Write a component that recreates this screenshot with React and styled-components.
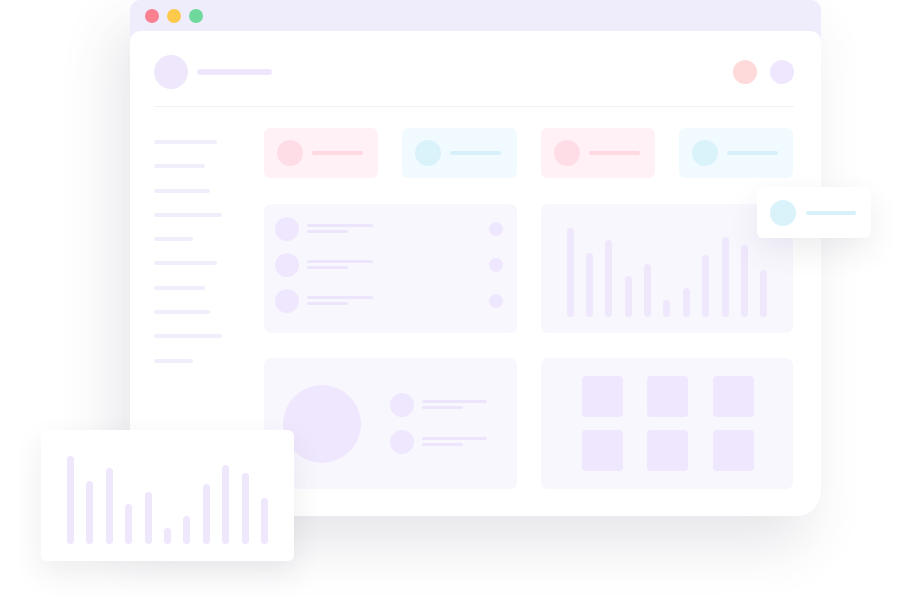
import React from 'react';
import styled, { createGlobalStyle } from 'styled-components';

const GlobalStyle = createGlobalStyle`
  html, body { margin: 0; padding: 0; background: #ffffff; }
  body { font-family: "Liberation Sans", Arial, sans-serif; overflow: hidden; }
`;

const Stage = styled.div`
  position: relative;
  width: 900px;
  height: 600px;
  background: #ffffff;
`;

const Window = styled.div`
  margin-left: 130px;
  width: 691px;
  height: 516px;
  display: flex;
  flex-direction: column;
  background: #efecfb;
  border-radius: 10px 10px 24px 24px;
  box-shadow: -14px 28px 55px rgba(60, 60, 90, 0.13);
`;

const TitleBar = styled.div`
  height: 31px;
  flex: none;
  display: flex;
  align-items: center;
  gap: 8px;
  padding-left: 15px;
`;

const Dot = styled.span`
  width: 14px;
  height: 14px;
  border-radius: 50%;
  background: ${(p) => p.color};
`;

const Panel = styled.div`
  flex: 1;
  background: #ffffff;
  border-radius: 10px 10px 24px 24px;
  padding: 24px 28px 27px 24px;
  display: flex;
  flex-direction: column;
`;

const Header = styled.div`
  display: flex;
  align-items: center;
  gap: 9px;
  margin-right: -1px;
  padding-bottom: 17px;
  border-bottom: 1.5px solid #f2f1f6;
`;

const Circle = styled.span`
  flex: none;
  display: block;
  width: ${(p) => p.size}px;
  height: ${(p) => p.size}px;
  border-radius: 50%;
  background: ${(p) => p.color};
`;

const Line = styled.span`
  display: block;
  width: ${(p) => p.w}px;
  height: ${(p) => p.h || 4}px;
  border-radius: 3px;
  background: ${(p) => p.color};
`;

const Spacer = styled.div`
  flex: 1;
`;

const HeaderIcons = styled.div`
  display: flex;
  gap: 13px;
  margin-right: 0;
`;

const Body = styled.div`
  flex: 1;
  display: flex;
  padding-top: 21px;
`;

const Sidebar = styled.div`
  width: 110px;
  flex: none;
  display: flex;
  flex-direction: column;
  gap: 20.3px;
  padding-top: 12px;
`;

const Main = styled.div`
  flex: 1;
  display: flex;
  flex-direction: column;
  gap: 25.5px;
`;

const StatGrid = styled.div`
  display: grid;
  grid-template-columns: repeat(4, 1fr);
  gap: 24px;
`;

const StatCard = styled.div`
  height: 50px;
  border-radius: 6px;
  background: ${(p) => p.bg};
  display: flex;
  align-items: center;
  gap: 9px;
  padding-left: 13px;
`;

const CardRow = styled.div`
  display: grid;
  grid-template-columns: 1fr 1fr;
  gap: 24px;
  height: ${(p) => p.h}px;
`;

const Card = styled.div`
  background: #f9f7fe;
  border-radius: 7px;
`;

const ListCard = styled(Card)`
  display: flex;
  flex-direction: column;
  gap: 12px;
  padding: 13px 14px 0 11px;
`;

const ListRow = styled.div`
  display: flex;
  align-items: center;
  gap: 8px;
`;

const LineStack = styled.div`
  display: flex;
  flex-direction: column;
  gap: 3px;
`;

const Bars = styled.div`
  display: flex;
  align-items: flex-end;
  gap: ${(p) => p.gap}px;
  height: ${(p) => p.h}px;
`;

const Bar = styled.span`
  width: 7px;
  height: ${(p) => p.h}px;
  border-radius: 4px;
  background: #efe8fd;
`;

const ChartCard = styled(Card)`
  display: flex;
  align-items: flex-end;
  padding: 0 0 16px 26px;
`;

const PieCard = styled(Card)`
  display: flex;
  align-items: center;
  padding-left: 19px;
  gap: 29px;
`;

const Legend = styled.div`
  display: flex;
  flex-direction: column;
  gap: 13px;
  margin-top: -1px;
`;

const TileCard = styled(Card)`
  display: grid;
  grid-template-columns: repeat(3, 41px);
  grid-template-rows: repeat(2, 41px);
  gap: 13px 24.5px;
  padding: 18px 0 0 41px;
`;

const Tile = styled.span`
  border-radius: 4px;
  background: #efe7fd;
`;

const FloatCard = styled.div`
  position: absolute;
  background: #ffffff;
  border-radius: 6px;
  box-shadow: 0 12px 30px rgba(50, 50, 80, 0.09);
`;

const BadgeCard = styled(FloatCard)`
  left: 757px;
  top: 187px;
  width: 114px;
  height: 51px;
  display: flex;
  align-items: center;
  gap: 10px;
  padding-left: 13px;
  box-sizing: border-box;
`;

const ChartFloat = styled(FloatCard)`
  left: 41px;
  top: 430px;
  width: 253px;
  height: 131px;
  box-sizing: border-box;
  display: flex;
  align-items: flex-end;
  padding: 0 0 17px 26px;
`;

const sideLines = [63, 51, 56, 68, 39, 63, 51, 56, 68, 39];
const stats = [
  { bg: '#fff1f5', dot: '#ffdde7', line: '#ffd8e2' },
  { bg: '#f1fbff', dot: '#daf3fb', line: '#d6f1fa' },
  { bg: '#fff1f5', dot: '#ffdde7', line: '#ffd8e2' },
  { bg: '#f1fbff', dot: '#daf3fb', line: '#d6f1fa' },
];
const mainBars = [89, 64, 77, 41, 53, 17, 29, 62, 80, 72, 47];
const floatBars = [88, 63, 76, 40, 52, 16, 28, 60, 79, 71, 46];

const BarChart = ({ data, h, gap }) => (
  <Bars h={h} gap={gap}>
    {data.map((v, i) => <Bar key={i} h={v} />)}
  </Bars>
);

export default function App() {
  return (
    <Stage>
      <GlobalStyle />
      <Window>
        <TitleBar>
          <Dot color="#f8808f" />
          <Dot color="#fdca4c" />
          <Dot color="#6fd99d" />
        </TitleBar>
        <Panel>
          <Header>
            <Circle size={34} color="#efe8fd" />
            <Line w={75} h={6} color="#efe7fd" />
            <Spacer />
            <HeaderIcons>
              <Circle size={24} color="#fedada" />
              <Circle size={24} color="#efe7fd" />
            </HeaderIcons>
          </Header>
          <Body>
            <Sidebar>
              {sideLines.map((w, i) => <Line key={i} w={w} color="#f0eefb" />)}
            </Sidebar>
            <Main>
              <StatGrid>
                {stats.map((s, i) => (
                  <StatCard key={i} bg={s.bg}>
                    <Circle size={26} color={s.dot} />
                    <Line w={51} color={s.line} />
                  </StatCard>
                ))}
              </StatGrid>
              <CardRow h={129}>
                <ListCard>
                  {[0, 1, 2].map((i) => (
                    <ListRow key={i}>
                      <Circle size={24} color="#efe7fd" />
                      <LineStack>
                        <Line w={66} h={3} color="#ede5fc" />
                        <Line w={41} h={3} color="#ede5fc" />
                      </LineStack>
                      <Spacer />
                      <Circle size={14} color="#efe7fd" />
                    </ListRow>
                  ))}
                </ListCard>
                <ChartCard>
                  <BarChart data={mainBars} h={89} gap={12.4} />
                </ChartCard>
              </CardRow>
              <CardRow h={131}>
                <PieCard>
                  <Circle size={78} color="#efe7fd" />
                  <Legend>
                    {[0, 1].map((i) => (
                      <ListRow key={i}>
                        <Circle size={24} color="#efe7fd" />
                        <LineStack>
                          <Line w={65} h={3} color="#ede5fc" />
                          <Line w={41} h={3} color="#ede5fc" />
                        </LineStack>
                      </ListRow>
                    ))}
                  </Legend>
                </PieCard>
                <TileCard>
                  {[0, 1, 2, 3, 4, 5].map((i) => <Tile key={i} />)}
                </TileCard>
              </CardRow>
            </Main>
          </Body>
        </Panel>
      </Window>
      <BadgeCard>
        <Circle size={26} color="#daf3fb" />
        <Line w={50} color="#d6f1fa" />
      </BadgeCard>
      <ChartFloat>
        <BarChart data={floatBars} h={88} gap={12.4} />
      </ChartFloat>
    </Stage>
  );
}
